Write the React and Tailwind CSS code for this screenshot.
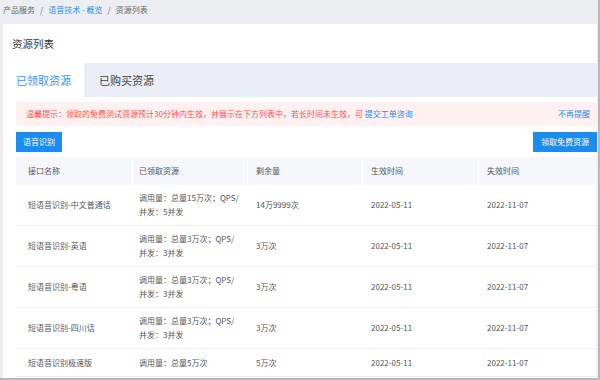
import React from "react";

const rows = [
    ["短语音识别-中文普通话", ["调用量：总量15万次；QPS/", "并发：5并发"], "14万9999次"],
    ["短语音识别-英语", ["调用量：总量3万次；QPS/", "并发：3并发"], "3万次"],
    ["短语音识别-粤语", ["调用量：总量3万次；QPS/", "并发：3并发"], "3万次"],
    ["短语音识别-四川话", ["调用量：总量3万次；QPS/", "并发：3并发"], "3万次"],
    ["短语音识别极速版", ["调用量：总量5万次"], "5万次"],
];

const heads = ["接口名称", "已领取资源", "剩余量", "生效时间", "失效时间"];
const pads = ["pl-[12px]", "pl-[6px]", "pl-[8px]", "pl-[8px]", "pl-[8px]"];

const App = () => {
    return (
        <div className="w-[600px] h-[380px] overflow-hidden bg-[#eceef1] border-r-2 border-b-2 border-[#b8b8b8] font-['Noto_Sans_CJK_SC',sans-serif] pl-[3px] pr-px">
            <div className="h-[24px] pb-[4px] flex items-center gap-[4px] text-[8px] text-[#666]">
                <span>产品服务</span>
                <span className="px-[1px]">/</span>
                <span className="text-[#2d8cf0]">语音技术 - 概览</span>
                <span className="px-[1px]">/</span>
                <span>资源列表</span>
            </div>
            <div className="h-[39px] bg-white flex items-center pl-[9px] text-[10.5px] text-[#333]">资源列表</div>
            <div className="h-[34px] bg-[#ebeef6] flex text-[11px]">
                <div className="bg-white px-[13px] flex items-center text-[#3d95ee]">已领取资源</div>
                <div className="pl-[15px] flex items-center text-[#444]">已购买资源</div>
            </div>
            <div className="bg-white pl-[13px] pt-[5px] h-[300px]">
                <div className="h-[24px] bg-[#fff1f1] flex items-center justify-between pl-[10px] pr-[7px] text-[8px]">
                    <span className="text-[#f25454]">
                        温馨提示：领取的免费测试资源预计30分钟内生效，并展示在下方列表中，若长时间未生效，可 <span className="text-[#2d8cf0]">提交工单咨询</span>
                    </span>
                    <span className="text-[#2d8cf0]">不再提醒</span>
                </div>
                <div className="mt-[6px] flex justify-between text-[8px] text-white">
                    <div className="h-[20px] px-[7px] bg-[#1b8cf0] flex items-center">语音识别</div>
                    <div className="h-[20px] px-[8px] bg-[#1b8cf0] flex items-center">领取免费资源</div>
                </div>
                <div className="mt-[5px] text-[8px] text-[#555] border-r border-[#eef0f3]">
                    <div className="grid grid-cols-[117px_115px_115px_116px_117px] h-[28px] bg-[#f5f7fa]">
                        {heads.map((h, i) => (
                            <div key={h} className={"flex items-center border-r border-white " + pads[i]}>{h}</div>
                        ))}
                    </div>
                    {rows.map((r) => (
                        <div key={r[0]} className={"grid grid-cols-[117px_115px_115px_116px_117px] border-b border-[#eef0f3] " + (r[1].length > 1 ? "h-[41px]" : "h-[28px]")}>
                            <div className={"flex items-center " + pads[0]}>{r[0]}</div>
                            <div className={"flex flex-col justify-center leading-[14px] " + pads[1]}>
                                {r[1].map((l) => (
                                    <span key={l}>{l}</span>
                                ))}
                            </div>
                            <div className={"flex items-center " + pads[2]}>{r[2]}</div>
                            <div className={"flex items-center " + pads[3]}>2022-05-11</div>
                            <div className={"flex items-center " + pads[4]}>2022-11-07</div>
                        </div>
                    ))}
                </div>
            </div>
        </div>
    );
};

export default App;
